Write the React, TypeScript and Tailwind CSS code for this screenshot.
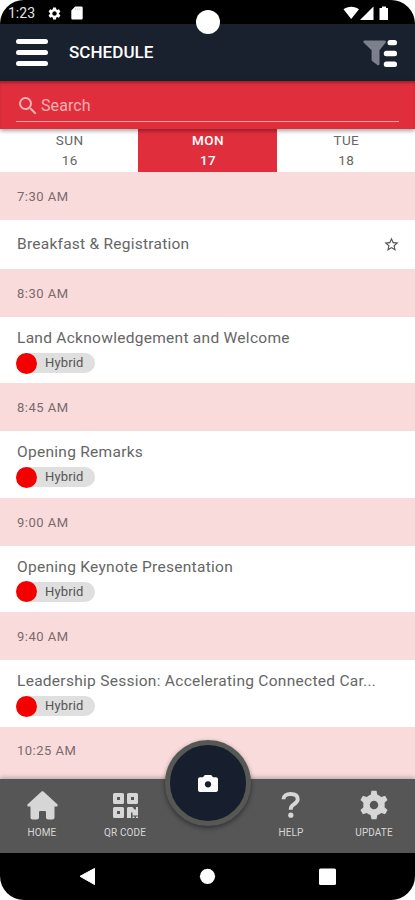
import { MdOutlineStarBorder, MdSearch, MdSettings } from "react-icons/md"

const DAYS = [
  { name: "SUN", date: "16", active: false },
  { name: "MON", date: "17", active: true },
  { name: "TUE", date: "18", active: false },
]

const SESSIONS = [
  { time: "7:30 AM", title: "Breakfast & Registration", hybrid: false },
  { time: "8:30 AM", title: "Land Acknowledgement and Welcome", hybrid: true },
  { time: "8:45 AM", title: "Opening Remarks", hybrid: true },
  { time: "9:00 AM", title: "Opening Keynote Presentation", hybrid: true },
  { time: "9:40 AM", title: "Leadership Session: Accelerating Connected Car...", hybrid: true },
]

function StatusBar() {
  return (
    <div className="relative h-6 shrink-0 bg-black flex items-center justify-between pl-[8px] pr-[26px] text-white">
      <div className="flex items-center h-full pt-[2px]">
        <span className="w-[39px] text-[14px] leading-none text-[#e4e4e4]">1:23</span>
        <MdSettings className="size-[15px]" />
        <svg className="ml-[9px] w-[12px] h-[14px]" viewBox="0 0 12 14" fill="currentColor">
          <path d="M4.2 0.5h6.3a1.2 1.2 0 0 1 1.2 1.2v10.6a1.2 1.2 0 0 1-1.2 1.2h-9a1.2 1.2 0 0 1-1.2-1.2V4.4z" />
          <path d="M4.6 2.3v1.8M6.7 2.3v1.800M8.800 2.3v1.800" stroke="#bbb" strokeWidth="0.8" />
        </svg>
      </div>
      <svg className="w-[46px] h-[16px] mt-[1px]" viewBox="0 0 46 16" fill="currentColor">
        <path d="M0.5 4.2C4.500 0.800 12 0.800 16 4.2L8.2 14z" />
        <path d="M30.500 1.500v13.500h-13.500z" />
        <path d="M39 1.500h4v1.500h2v12h-8.500v-12h2.500z" />
      </svg>
      <div className="absolute left-[196px] top-[10px] z-10 size-6 rounded-full bg-white" />
    </div>
  )
}

function Header() {
  return (
    <header className="h-[57px] shrink-0 bg-[#1a212e] flex items-center pl-4 pr-[18px]">
      <div className="w-8 flex flex-col gap-[5.500px]">
        <div className="h-[5.500px] rounded-full bg-white" />
        <div className="h-[5.500px] rounded-full bg-white" />
        <div className="h-[5.500px] rounded-full bg-white" />
      </div>
      <h1 className="ml-[21px] flex-1 pt-[1px] text-[17px] tracking-[0.05px] font-medium text-white">SCHEDULE</h1>
      <svg className="w-[36px] h-[30px]" viewBox="0 0 36 30">
        <path d="M3.500 2.500h20c1.200 0 1.800 1.200 1 2.200l-6 7.500v13.800c0 1.100-1.200 1.600-2.100 1l-5-3.800c-.5-.4-.8-.9-.8-1.500v-9.500l-7.800-7.500c-.8-.9-.5-2.200.7-2.200z" fill="#7c808c" />
        <rect x="26.500" y="2" width="9.500" height="5.200" rx="2.500" fill="#fff" />
        <rect x="22.800" y="12.700" width="13.200" height="5.500" rx="2.500" fill="#fff" />
        <rect x="22.800" y="23.500" width="13.200" height="5.500" rx="2.500" fill="#fff" />
      </svg>
    </header>
  )
}

function SearchBar() {
  return (
    <div className="relative z-10 h-12 shrink-0 bg-[#e02e3c] px-4 pt-2 shadow-[0_2px_4px_rgba(0,0,0,0.35),inset_0_3px_3px_-1px_rgba(0,0,0,0.3)]">
      <div className="h-[33px] border-b border-[#f4a3a8] flex items-center pt-[1px] text-[#f6afb2]">
        <MdSearch className="size-[24px]" />
        <span className="pl-[1px] text-[16px] tracking-[0.1px]">Search</span>
      </div>
    </div>
  )
}

function DayTabs() {
  return (
    <div className="h-[43px] shrink-0 grid grid-cols-3 bg-white">
      {DAYS.map(d => (
        <div
          key={d.name}
          className={`flex flex-col items-center pl-[1px] pt-[1px] text-[13.500px] leading-5 tracking-[0.4px] ${d.active ? "bg-[#e02e3c] text-white font-medium" : "text-[#666]"}`}
        >
          <span>{d.name}</span>
          <span>{d.date}</span>
        </div>
      ))}
    </div>
  )
}

function TimeRow({ time }: { time: string }) {
  return (
    <div className="h-12 shrink-0 bg-[#f9dbdc] pl-[17px] pt-[1px] flex items-center text-[13px] tracking-[0.5px] text-[#796a6c]">
      {time}
    </div>
  )
}

function HybridBadge() {
  return (
    <div className="mt-[4px] h-5 w-[79px] rounded-full bg-[#dfdfdf] flex items-center">
      <div className="size-[21px] shrink-0 rounded-full bg-[#f50000]" />
      <span className="ml-2 text-[13px] leading-5 tracking-[0.15px] text-[#555]">Hybrid</span>
    </div>
  )
}

function NavItem({ label, children }: { label: string; children: React.ReactNode }) {
  return (
    <div className="flex flex-col items-center pl-[1px] pt-[10px] text-[#d6d6d6]">
      <div className="h-8 flex items-center justify-center">{children}</div>
      <span className="mt-[5px] text-[10px] leading-[14px] tracking-[0.1px]">{label}</span>
    </div>
  )
}

function BottomNav() {
  return (
    <nav className="relative z-10 h-[74px] shrink-0 bg-[#565656] grid grid-cols-5 shadow-[0_-2px_4px_rgba(0,0,0,0.22)]">
      <NavItem label="HOME">
        <svg className="w-[31px] h-[29px]" viewBox="0 0 31 29" fill="currentColor">
          <path d="M14.300 0.800c.7-.6 1.700-.6 2.400 0l13.600 12.500c.8.8.3 2.200-.9 2.200h-1.900v11c0 1.100-.9 2-2 2h-4.500c-1.100 0-2-.9-2-2v-5.200c0-.8-.6-1.300-1.300-1.300h-4.400c-.8 0-1.300.6-1.300 1.300v5.200c0 1.100-.9 2-2 2H5.500c-1.100 0-2-.9-2-2v-11H1.600c-1.200 0-1.700-1.400-.9-2.200z" />
        </svg>
      </NavItem>
      <NavItem label="QR CODE">
        <svg className="w-[25px] h-[25px]" viewBox="0 0 25 25" fill="currentColor">
          <path fillRule="evenodd" d="M1.500 0h8A1.500 1.500 0 0 1 11 1.500v8A1.500 1.500 0 0 1 9.500 11h-8A1.500 1.500 0 0 1 0 9.500v-8A1.500 1.500 0 0 1 1.500 0zM4 4v3h3v-3z" />
          <path fillRule="evenodd" d="M15.500 0h8A1.500 1.500 0 0 1 25 1.500v8A1.500 1.500 0 0 1 23.500 11h-8A1.500 1.500 0 0 1 14 9.500v-8A1.500 1.500 0 0 1 15.500 0zM18 4v3h3v-3z" />
          <path fillRule="evenodd" d="M1.500 14h8A1.500 1.500 0 0 1 11 15.500v8A1.500 1.500 0 0 1 9.500 25h-8A1.500 1.500 0 0 1 0 23.500v-8A1.500 1.500 0 0 1 1.500 14zM4 18v3h3v-3z" />
          <path d="M15 14h4.500l2 2.500h1.500v-2.500h2v8.500h-5.500v-3h-1.500v5.500h-4v-10zM19.500 23.500h2v1.500h-2zM23 23.500h2v1.500h-2z" />
        </svg>
      </NavItem>
      <div />
      <NavItem label="HELP">
        <svg className="w-[20px] h-[26px]" viewBox="0 0 20 26" fill="none" stroke="currentColor">
          <path d="M2.500 7.200c0-3.400 2.900-5.200 7-5.200 4.400 0 7.200 1.900 7.200 5.200 0 4.700-6.900 4.900-6.900 9.300v1.300" strokeWidth="3.900" />
          <circle cx="9.800" cy="23.200" r="2.600" fill="currentColor" stroke="none" />
        </svg>
      </NavItem>
      <NavItem label="UPDATE">
        <svg className="size-[30px]" viewBox="0 0 30 30" fill="none" stroke="currentColor">
          <circle cx="15" cy="15" r="7.500" strokeWidth="6.500" />
          <g fill="currentColor" stroke="none">
            <path id="tooth" d="M12.500 0.800h5l1.300 6.200h-7.600z" />
            <use href="#tooth" transform="rotate(60 15 15)" />
            <use href="#tooth" transform="rotate(120 15 15)" />
            <use href="#tooth" transform="rotate(180 15 15)" />
            <use href="#tooth" transform="rotate(240 15 15)" />
            <use href="#tooth" transform="rotate(300 15 15)" />
          </g>
        </svg>
      </NavItem>
      <div className="absolute left-[165px] top-[-39px] size-[86px] rounded-full border-[5px] border-[#555855] bg-[#171f2e] shadow-[0_2px_5px_rgba(0,0,0,0.45)] flex items-center justify-center">
        <svg className="w-[20px] h-[17px]" viewBox="0 0 20 17">
          <path d="M6.800 0h6.400l1.800 2.300h3c1.100 0 2 .9 2 2V15c0 1.100-.9 2-2 2H2c-1.100 0-2-.9-2-2V4.300c0-1.100.9-2 2-2h3z" fill="#fff" />
          <circle cx="10" cy="9.300" r="3.100" fill="#171f2e" />
        </svg>
      </div>
    </nav>
  )
}

function AndroidBar() {
  return (
    <div className="h-[47px] shrink-0 bg-black">
      <svg className="w-full h-full" viewBox="0 0 415 47" fill="#fff">
        <path d="M94.500 15.500v16L80 23.300z" stroke="#fff" strokeLinejoin="round" />
        <circle cx="207.500" cy="23.300" r="7.600" />
        <rect x="319" y="15.500" width="17" height="16.500" rx="1.500" />
      </svg>
    </div>
  )
}

export default function App() {
  return (
    <div className="w-[415px] h-[900px] bg-white font-['Roboto',sans-serif]">
      <div className="h-full flex flex-col overflow-hidden rounded-[24px] bg-white">
        <StatusBar />
        <Header />
        <SearchBar />
        <DayTabs />
        <main className="flex-1 min-h-0 overflow-hidden flex flex-col bg-[#f9dbdc]">
          {SESSIONS.map(s => (
            <div key={s.time} className="shrink-0">
              <TimeRow time={s.time} />
              {s.hybrid ? (
                <div className="h-[66.400px] bg-white px-4 pt-[10px]">
                  <p className="pl-[1px] text-[15.500px] leading-[22px] tracking-[0.28px] text-[#666] whitespace-nowrap">{s.title}</p>
                  <HybridBadge />
                </div>
              ) : (
                <div className="h-[49px] bg-white pl-4 pr-[15px] flex items-center justify-between">
                  <p className="pl-[1px] pt-[1px] text-[15.500px] tracking-[0.25px] text-[#666]">{s.title}</p>
                  <MdOutlineStarBorder className="size-[17px] text-[#555]" />
                </div>
              )}
            </div>
          ))}
          <TimeRow time="10:25 AM" />
        </main>
        <BottomNav />
        <AndroidBar />
      </div>
    </div>
  )
}
